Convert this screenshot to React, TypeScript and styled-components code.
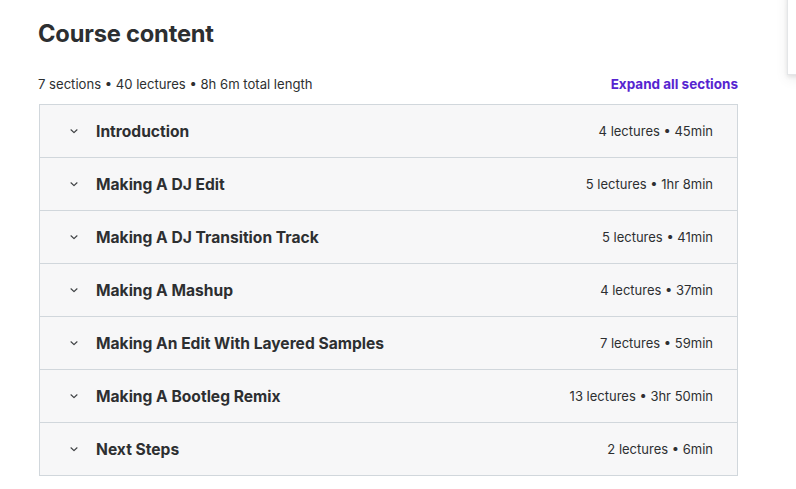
import React from 'react';
import styled, { createGlobalStyle } from 'styled-components';

const GlobalStyle = createGlobalStyle`
  body {
    margin: 0;
    background: #ffffff;
    font-family: Inter, "Liberation Sans", sans-serif;
    color: #2d2f31;
  }
`;

const Page = styled.div`
  width: 796px;
  height: 489px;
  overflow: hidden;
  position: relative;
`;

const Content = styled.div`
  width: 700px;
  padding: 18px 0 0 38px;
`;

const Title = styled.h2`
  margin: 0 0 24px;
  font-size: 23.7px;
  font-weight: 700;
  letter-spacing: -0.2px;
  line-height: 32px;
  color: #2d2f31;
`;

const SubHeader = styled.div`
  display: flex;
  justify-content: space-between;
  align-items: center;
  height: 20px;
  margin-bottom: 10px;
`;

const Stats = styled.span`
  font-size: 13.1px;
  color: #2d2f31;
`;

const ExpandLink = styled.button`
  border: none;
  background: none;
  padding: 0;
  font-family: inherit;
  font-size: 13.5px;
  font-weight: 700;
  color: #5624d0;
  cursor: pointer;
`;

const Table = styled.div`
  margin-left: 1px;
  border: 1px solid #d1d7dc;
  border-bottom: none;
`;

const Row = styled.div`
  display: flex;
  align-items: center;
  height: 52px;
  padding: 0 24px 0 29px;
  background: #f7f7f8;
  border-bottom: 1px solid #d1d7dc;
`;

const Chevron = styled.svg`
  width: 10px;
  height: 10px;
  margin-right: 17px;
  flex-shrink: 0;
`;

const SectionTitle = styled.span`
  flex: 1;
  font-size: 15.6px;
  font-weight: 700;
  color: #2d2f31;
`;

const Meta = styled.span`
  font-size: 13px;
  color: #2d2f31;
`;

const SideCard = styled.div`
  position: absolute;
  left: 787px;
  top: -10px;
  width: 300px;
  height: 83px;
  background: #fff;
  box-shadow: 0 2px 4px rgba(0, 0, 0, 0.08), 0 4px 12px rgba(0, 0, 0, 0.08);
  border: 1px solid #e4e6e8;
`;

const sections = [
  { title: 'Introduction', meta: '4 lectures • 45min' },
  { title: 'Making A DJ Edit', meta: '5 lectures • 1hr 8min' },
  { title: 'Making A DJ Transition Track', meta: '5 lectures • 41min' },
  { title: 'Making A Mashup', meta: '4 lectures • 37min' },
  { title: 'Making An Edit With Layered Samples', meta: '7 lectures • 59min' },
  { title: 'Making A Bootleg Remix', meta: '13 lectures • 3hr 50min' },
  { title: 'Next Steps', meta: '2 lectures • 6min' },
];

const App = () => (
  <Page>
    <GlobalStyle />
    <Content>
      <Title>Course content</Title>
      <SubHeader>
        <Stats>7 sections • 40 lectures • 8h 6m total length</Stats>
        <ExpandLink>Expand all sections</ExpandLink>
      </SubHeader>
      <Table>
        {sections.map((section) => (
          <Row key={section.title}>
            <Chevron viewBox="0 0 10 10">
              <path d="M2 3.8 L5 6.6 L8 3.8" fill="none" stroke="#3e4143" strokeWidth="1.2" strokeLinecap="round" strokeLinejoin="round" />
            </Chevron>
            <SectionTitle>{section.title}</SectionTitle>
            <Meta>{section.meta}</Meta>
          </Row>
        ))}
      </Table>
    </Content>
    <SideCard />
  </Page>
);

export default App;
